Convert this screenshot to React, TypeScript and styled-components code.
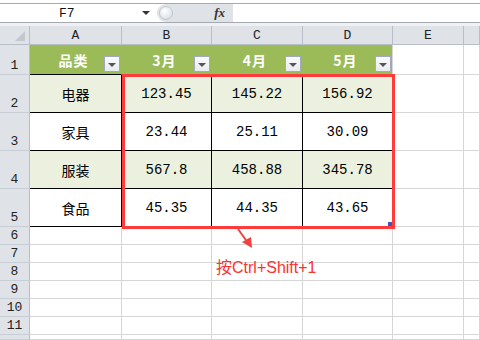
import React from 'react';
import styled, { createGlobalStyle, css } from 'styled-components';

const GlobalStyle = createGlobalStyle`
  html, body {
    margin: 0;
    padding: 0;
    background: #ffffff;
    overflow: hidden;
  }
  * {
    box-sizing: border-box;
  }
`;

const Page = styled.div`
  position: relative;
  width: 480px;
  height: 340px;
  overflow: hidden;
  background: #ffffff;
  font-family: "Liberation Mono", "Noto Sans CJK SC", monospace;
`;

const FormulaBar = styled.div`
  height: 26px;
  padding-top: 3px;
  background: #ffffff;
  border-bottom: 3px solid #eef0f3;
`;

const FormulaInner = styled.div`
  display: flex;
  height: 20px;
  border-top: 1px solid #a5a9b0;
  border-bottom: 1px solid #a5a9b0;
`;

const NameBox = styled.div`
  width: 157px;
  display: flex;
  align-items: center;
  padding-left: 59px;
  padding-right: 7px;
  font-size: 13px;
  color: #111;
  background: #ffffff;
`;

const NameText = styled.span`
  flex: 1;
`;

const DropTriangle = styled.span`
  width: 0;
  height: 0;
  border-left: 4px solid transparent;
  border-right: 4px solid transparent;
  border-top: 4px solid #333;
`;

const FxArea = styled.div`
  width: 76px;
  display: flex;
  align-items: center;
  justify-content: space-between;
  padding: 0 8px 0 2px;
  background: #dfe3e8;
  border-radius: 9px 0 0 9px;
`;

const Knob = styled.span`
  width: 14px;
  height: 14px;
  border-radius: 50%;
  background: radial-gradient(circle at 40% 35%, #ffffff 0%, #e4e7ec 60%, #c9ced6 100%);
  border: 1px solid #c2c7cf;
`;

const Fx = styled.span`
  font-family: "Liberation Serif", serif;
  font-style: italic;
  font-weight: bold;
  font-size: 13px;
  color: #333;
`;

const FormulaInput = styled.div`
  flex: 1;
  background: #ffffff;
`;

const Sheet = styled.div`
  display: grid;
  grid-template-columns: 30px 92px 90px 91px 90px 71px 1fr;
  grid-template-rows: 19px 30px 38px 38px 38px 38px 18px 18px 18px 18px 18px 18px 1fr;
  height: 314px;
`;

type Tone = 'head' | 'green' | 'white' | 'blank';

const Cell = styled.div<{ $tone: Tone; $edge?: boolean }>`
  display: flex;
  align-items: center;
  justify-content: center;
  border-right: 1px solid #d6d6d6;
  border-bottom: 1px solid #d6d6d6;
  font-size: 14px;
  color: #000;
  ${p => p.$tone === 'head' && css`
    position: relative;
    background: #9bbb59;
    border-right-color: #9bbb59;
    border-bottom-color: #000;
    color: #fff;
    font-weight: bold;
  `}
  ${p => p.$tone === 'green' && css`
    background: #ebf1de;
    border-right-color: #000;
    border-bottom-color: #000;
  `}
  ${p => p.$tone === 'white' && css`
    background: #ffffff;
    border-right-color: #000;
    border-bottom-color: #000;
  `}
  ${p => p.$edge && css`
    border-right-color: #d6d6d6;
  `}
`;

const ColHead = styled.div`
  display: flex;
  align-items: center;
  justify-content: center;
  background: #dfe3e8;
  border-right: 1px solid #b9bfc8;
  border-bottom: 1px solid #b9bfc8;
  font-size: 13px;
  color: #222;
`;

const Corner = styled(ColHead)`
  position: relative;
  &::after {
    content: '';
    position: absolute;
    right: 4px;
    bottom: 3px;
    width: 0;
    height: 0;
    border-left: 10px solid transparent;
    border-bottom: 10px solid #c3c8cf;
  }
`;

const RowHead = styled.div`
  display: flex;
  align-items: flex-end;
  justify-content: center;
  padding-bottom: 1px;
  background: #dfe3e8;
  border-right: 1px solid #b9bfc8;
  border-bottom: 1px solid #c9ced6;
  font-size: 13px;
  line-height: 15px;
  color: #222;
`;

const HeadLabel = styled.span`
  margin-right: 4px;
  font-family: "Noto Sans CJK SC", "Liberation Sans", sans-serif;
  font-size: 14px;
  letter-spacing: 1px;
`;

const FilterButton = styled.span`
  position: absolute;
  right: 1px;
  bottom: 2px;
  width: 16px;
  height: 16px;
  display: flex;
  align-items: center;
  justify-content: center;
  background: linear-gradient(#fafbfc, #e8ebf0);
  border: 1px solid #a3abbb;
  &::after {
    content: '';
    width: 0;
    height: 0;
    border-left: 4px solid transparent;
    border-right: 4px solid transparent;
    border-top: 4px solid #555;
    margin-top: 1px;
  }
`;

const Selection = styled.div`
  position: absolute;
  left: 122px;
  top: 74px;
  width: 273px;
  height: 155px;
  border: 3px solid #ff3b3b;
  pointer-events: none;
`;

const FillHandle = styled.div`
  position: absolute;
  right: 0;
  bottom: 0;
  width: 4px;
  height: 4px;
  background: #3d55b8;
`;

const Arrow = styled.svg`
  position: absolute;
  left: 232px;
  top: 226px;
`;

const Note = styled.div`
  position: absolute;
  left: 216px;
  top: 254px;
  font-family: "Liberation Sans", "Noto Sans CJK SC", sans-serif;
  font-size: 16px;
  color: #ff3030;
`;

const columns = ['A', 'B', 'C', 'D', 'E', ''];
const headers = ['品类', '3月', '4月', '5月'];

const rows = [
  { name: '电器', values: ['123.45', '145.22', '156.92'] },
  { name: '家具', values: ['23.44', '25.11', '30.09'] },
  { name: '服装', values: ['567.8', '458.88', '345.78'] },
  { name: '食品', values: ['45.35', '44.35', '43.65'] },
];

const blankRows = ['6', '7', '8', '9', '10', '11', ''];

const App: React.FC = () => {
  return (
    <>
      <GlobalStyle />
      <Page>
        <FormulaBar>
          <FormulaInner>
            <NameBox>
              <NameText>F7</NameText>
              <DropTriangle />
            </NameBox>
            <FxArea>
              <Knob />
              <Fx>fx</Fx>
            </FxArea>
            <FormulaInput />
          </FormulaInner>
        </FormulaBar>
        <Sheet>
          <Corner />
          {columns.map((c, i) => (
            <ColHead key={i}>{c}</ColHead>
          ))}

          <RowHead>1</RowHead>
          {headers.map((h, i) => (
            <Cell key={h} $tone="head" $edge={i === 3}>
              <HeadLabel>{h}</HeadLabel>
              <FilterButton />
            </Cell>
          ))}
          <Cell $tone="blank" />
          <Cell $tone="blank" />

          {rows.map((r, ri) => {
            const tone: Tone = ri % 2 === 0 ? 'green' : 'white';
            return (
              <React.Fragment key={r.name}>
                <RowHead>{ri + 2}</RowHead>
                <Cell $tone={tone}>{r.name}</Cell>
                {r.values.map((v, vi) => (
                  <Cell key={vi} $tone={tone}>{v}</Cell>
                ))}
                <Cell $tone="blank" />
                <Cell $tone="blank" />
              </React.Fragment>
            );
          })}

          {blankRows.map((n, ri) => (
            <React.Fragment key={ri}>
              <RowHead>{n}</RowHead>
              {columns.map((_, i) => (
                <Cell key={i} $tone="blank" />
              ))}
            </React.Fragment>
          ))}
        </Sheet>

        <Selection>
          <FillHandle />
        </Selection>

        <Arrow width="26" height="26" viewBox="0 0 26 26">
          <line x1="6" y1="3" x2="16" y2="17" stroke="#f24040" strokeWidth="2" />
          <polygon points="10,16 20,22 19,11" fill="#f24040" />
        </Arrow>

        <Note>按Ctrl+Shift+1</Note>
      </Page>
    </>
  );
};

export default App;
